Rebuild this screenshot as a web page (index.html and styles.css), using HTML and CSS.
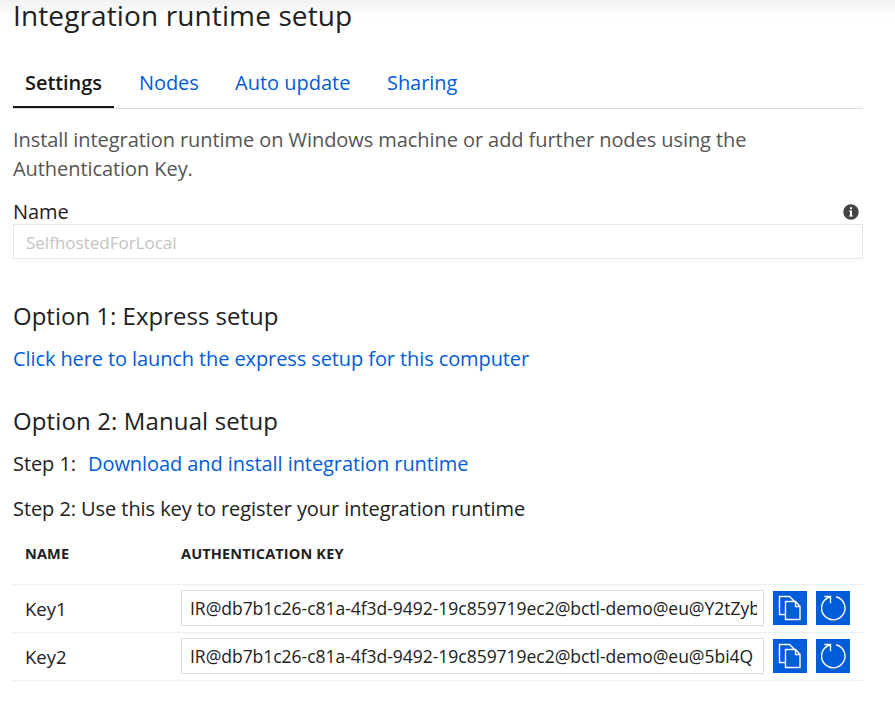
FILE: index.html
```html
<!DOCTYPE html>
<html lang="en">
<head>
<meta charset="utf-8">
<title>Integration runtime setup</title>
<link rel="stylesheet" href="styles.css">
</head>
<body>
<svg class="sprite" aria-hidden="true">
  <symbol id="copy" viewBox="0 0 34 34">
    <path d="M12.5 23.5h-6v-18h10.2l4.6 4.8M12.5 10.5h10l4.5 4.7v13.3H12.5zM22.5 10.5v5H27"/>
  </symbol>
  <symbol id="refresh" viewBox="0 0 34 34">
    <path d="M20.2 5.8A11.7 11.7 0 1 1 10.8 7.4L14.2 5.8M8.3 5.5h6.2v6.7"/>
  </symbol>
</svg>
<main class="panel">
  <h1 class="title"><span>Integration runtime setup</span></h1>
  <nav class="tabs">
    <a class="tab active"><span>Settings</span></a>
    <a class="tab nodes"><span>Nodes</span></a>
    <a class="tab auto"><span>Auto update</span></a>
    <a class="tab"><span>Sharing</span></a>
  </nav>
  <p class="intro"><span>Install integration runtime on Windows machine or add further nodes using the</span><br><span>Authentication Key.</span></p>
  <div class="field-head">
    <label for="name">Name</label>
    <svg class="info" viewBox="0 0 16 16"><circle cx="8" cy="8" r="7.7" fill="#444"/><path d="M7 3.2h2v2H7zM6 6.5h3v5h1v1H6v-1h1v-4H6z" fill="#fff"/></svg>
  </div>
  <div class="name-box" id="name"><span>SelfhostedForLocal</span></div>
  <h2 class="option first"><span>Option 1: Express setup</span></h2>
  <p class="line"><a class="express">Click here to launch the express setup for this computer</a></p>
  <h2 class="option second"><span>Option 2: Manual setup</span></h2>
  <p class="line step1"><span class="step-label">Step 1:</span><a class="download">Download and install integration runtime</a></p>
  <p class="line step2"><span>Step 2: Use this key to register your integration runtime</span></p>
  <div class="keys">
    <div class="row head"><span class="c1"><span>NAME</span></span><span><span class="auth">AUTHENTICATION KEY</span></span></div>
    <div class="row">
      <span class="c1">Key1</span>
      <div class="key"><div class="clip"><span>IR@db7b1c26-c81a-4f3d-9492-19c859719ec2@bctl-demo@eu@Y2tZyb</span></div></div>
      <button class="btn" aria-label="Copy"><svg><use href="#copy"/></svg></button>
      <button class="btn" aria-label="Refresh"><svg><use href="#refresh"/></svg></button>
    </div>
    <div class="row">
      <span class="c1">Key2</span>
      <div class="key"><div class="clip"><span>IR@db7b1c26-c81a-4f3d-9492-19c859719ec2@bctl-demo@eu@5bi4Q</span></div></div>
      <button class="btn" aria-label="Copy"><svg><use href="#copy"/></svg></button>
      <button class="btn" aria-label="Refresh"><svg><use href="#refresh"/></svg></button>
    </div>
  </div>
</main>
</body>
</html>
```
FILE: styles.css
```css
* { box-sizing: border-box; }
body {
  margin: 0;
  min-height: 722px;
  background: linear-gradient(#f2f2f2, #fff 18px) no-repeat;
  color: #212121;
  font: 20px/28px "Open Sans", "Noto Sans", sans-serif;
  letter-spacing: -0.07px;
  white-space: nowrap;
}
h1, h2, p { margin: 0; font-weight: 400; }
.sprite { position: absolute; width: 0; height: 0; }
.panel { width: 850px; margin-left: 13px; }
.title { height: 58px; font-size: 28px; line-height: 30px; letter-spacing: 0.12px; }
.tabs { display: flex; height: 51px; border-bottom: 1px solid #ddd; color: #015cda; }
.tab { height: 50px; padding: 11px 12px 0; margin-right: 13px; }
.tab.active { width: 101px; color: #161616; font-weight: 600; border-bottom: 2px solid #161616; }
.tab.nodes { width: 83px; }
.tab.auto { width: 139px; letter-spacing: 0; }
.intro { margin-top: 16px; line-height: 29px; color: #555; }
.field-head { display: flex; align-items: center; justify-content: space-between; height: 28px; margin-top: 15px; }
.info { width: 16px; height: 16px; margin: 0 4px 0 0; }
.name-box { height: 35px; margin-top: -2px; padding: 0 12px; border: 1px solid #e6e6e6; background: #fff; color: #c4c4c4; font-size: 17px; line-height: 35px; letter-spacing: 0; }
.option { font-size: 24px; line-height: 34px; letter-spacing: 0; }
.first { margin-top: 40px; }
.second { margin-top: 31px; letter-spacing: 0.12px; }
.line { margin-top: 12px; height: 28px; color: #212121; }
.line a { color: #015cda; }
.express { letter-spacing: -0.1px; }
.step1 { display: flex; }
.step-label { width: 75px; }
.step2 { margin-top: 17px; }
.row { display: flex; height: 48px; align-items: center; border-bottom: 1px solid #eee; letter-spacing: 0; }
.row.head { height: 62px; font-size: 14.5px; font-weight: 700; letter-spacing: 0.15px; }
.c1 { width: 168px; padding-left: 12px; font-size: 18.5px; }
.head .c1 { font-size: 14.5px; }
.key { width: 583px; height: 36px; margin-bottom: 1px; padding: 0 6px 0 8px; border: 1px solid #ddd; background: #fff; font-size: 17.5px; line-height: 34px; letter-spacing: -0.03px; }
.clip { height: 34px; overflow: hidden; }
.btn { width: 34px; height: 34px; margin: 0 0 1px 9px; padding: 0; border: 0; background: #015cda; }
.btn svg { display: block; width: 34px; height: 34px; fill: none; stroke: #fff; stroke-width: 1.4; }
```
